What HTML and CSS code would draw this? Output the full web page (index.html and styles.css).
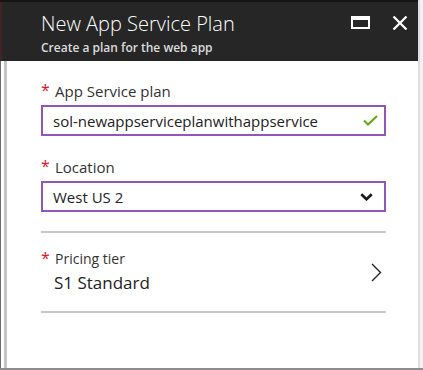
FILE: index.html
```html
<!DOCTYPE html>
<html>
<head>
<meta charset="utf-8">
<link rel="stylesheet" href="styles.css">
</head>
<body>
<div class="page">
  <div class="main">
    <div class="topline"></div>
    <header class="header">
      <div class="titles">
        <h1 class="title">New App Service Plan</h1>
        <div class="subtitle">Create a plan for the web app</div>
      </div>
      <div class="actions">
        <svg class="icon-max" width="19" height="13" viewBox="0 0 19 13"><rect x="1" y="2" width="17" height="10" fill="none" stroke="#fff" stroke-width="2"/><rect x="0" y="0" width="19" height="4" fill="#fff"/></svg>
        <svg class="icon-close" width="16" height="14" viewBox="0 0 16 14"><path d="M1.5 0.5 L14.5 13.5 M14.5 0.5 L1.5 13.5" stroke="#fff" stroke-width="2.2" fill="none"/></svg>
      </div>
    </header>
    <div class="body">
      <div class="rail"></div>
      <div class="content">
        <div class="field">
          <div class="label"><span class="req">*</span>App Service plan</div>
          <div class="input">
            <span class="value">sol-newappserviceplanwithappservice</span>
            <svg class="check" width="15" height="11" viewBox="0 0 15 11"><path d="M1 5.5 L5 9.5 L14 1" stroke="#5ea80f" stroke-width="2" fill="none"/></svg>
          </div>
        </div>
        <div class="field field-loc">
          <div class="label"><span class="req">*</span>Location</div>
          <div class="input">
            <span class="value">West US 2</span>
            <svg class="chev-down" width="13" height="8" viewBox="0 0 13 8"><path d="M1.3 1.3 L6.5 6.3 L11.7 1.3" stroke="#1a1a1a" stroke-width="2.6" fill="none"/></svg>
          </div>
        </div>
        <div class="divider"></div>
        <div class="picker">
          <div class="picker-text">
            <div class="label small"><span class="req">*</span>Pricing tier</div>
            <div class="picked">S1 Standard</div>
          </div>
          <svg class="chev-right" width="11" height="19" viewBox="0 0 11 19"><path d="M1 1 L9.5 9.5 L1 18" stroke="#222" stroke-width="1.4" fill="none"/></svg>
        </div>
        <div class="divider"></div>
      </div>
    </div>
  </div>
  <div class="edge"></div>
</div>
</body>
</html>
```
FILE: styles.css
```css
* { box-sizing: border-box; }
html, body { margin: 0; padding: 0; }
body {
  width: 423px;
  height: 370px;
  overflow: hidden;
  background: #fff;
  font-family: "Open Sans", "Noto Sans", sans-serif;
}
.page {
  display: flex;
  height: 370px;
  border-bottom: 2px solid #8c8c8c;
}
.main {
  width: 418px;
  display: flex;
  flex-direction: column;
}
.edge {
  width: 5px;
  border-left: 2px solid #dedde5;
  background: #f2f2f4;
}
.topline {
  height: 2px;
  background: #151515;
}
.header {
  height: 59px;
  background: #262626;
  border-left: 2px solid #3e2424;
  display: flex;
  justify-content: space-between;
  padding: 0 10px 0 39px;
}
.titles { padding-top: 8px; }
.title {
  margin: 0;
  font-weight: 300;
  font-size: 20px;
  line-height: 28px;
  color: #fff;
  letter-spacing: 0;
}
.subtitle {
  font-size: 12px;
  font-weight: 600;
  line-height: 16px;
  color: #dcdcdc;
  margin-top: 2px;
}
.actions {
  display: flex;
  align-items: flex-start;
  gap: 22px;
  padding-top: 14px;
}
.body {
  flex: 1;
  display: flex;
}
.rail {
  width: 7px;
  border-left: 1px solid #6e6e6e;
  border-right: 3px solid #c4c4c4;
}
.content {
  flex: 1;
  padding: 20px 32px 0 34px;
}
.label {
  font-size: 15px;
  line-height: 20px;
  color: #333;
  display: flex;
}
.label.small { font-size: 14px; }
.req {
  color: #e81123;
  width: 14px;
  font-size: 16px;
  line-height: 18px;
}
.input {
  margin-top: 4px;
  height: 31px;
  border: 2px solid #9056b8;
  display: flex;
  align-items: center;
  justify-content: space-between;
  padding: 0 6px 0 10px;
}
.value {
  font-size: 15px;
  color: #222;
}
.field-loc { margin-top: 21px; }
.divider {
  height: 2px;
  background: #c9c9c9;
}
.field-loc + .divider { margin-top: 19px; }
.picker {
  display: flex;
  justify-content: space-between;
  align-items: center;
  padding: 16px 4px 16px 0;
}
.picked {
  font-size: 17px;
  line-height: 24px;
  color: #222;
  padding-left: 13px;
  margin-top: 2px;
}
.chev-down { margin-right: 5px; }
```
